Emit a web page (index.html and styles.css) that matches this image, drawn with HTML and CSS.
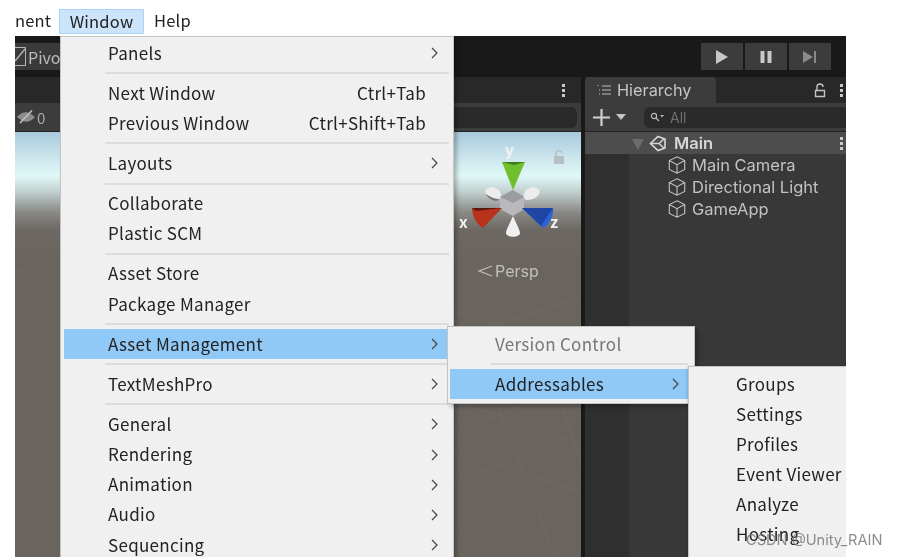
FILE: index.html
```html
<!DOCTYPE html>
<html lang="en">
<head>
<meta charset="utf-8">
<title>Unity Window menu</title>
<link rel="stylesheet" href="styles.css">
</head>
<body>
<div class="stage">
  <nav class="menubar">
    <span class="mb-item first">nent</span>
    <span class="mb-item active">Window</span>
    <span class="mb-item">Help</span>
  </nav>
  <div class="app">
    <header class="toolbar">
      <div class="pivot"><svg class="check" width="11" height="19" viewBox="0 0 11 19"><path d="M0 .5h10.500v18H0" fill="none" stroke="#b5b5b5" stroke-width="1"/><path d="M0 14L10 2" stroke="#b5b5b5" stroke-width="1.400"/></svg><span>Pivot</span></div>
      <div class="play">
        <span class="pbtn"><svg width="14" height="16" viewBox="0 0 14 16"><path d="M1 1l12 7-12 7z" fill="#c8c8c8"/></svg></span>
        <span class="pbtn"><svg width="14" height="14" viewBox="0 0 14 14"><path d="M1.500 1h4v12h-4zM8.500 1h4v12h-4z" fill="#c8c8c8"/></svg></span>
        <span class="pbtn"><svg width="16" height="14" viewBox="0 0 16 14"><path d="M1 1l10 6-10 6z" fill="#8a8a8a"/><path d="M12 1h2v12h-2z" fill="#8a8a8a"/></svg></span>
      </div>
    </header>
    <main class="panels">
      <section class="scene">
        <div class="tabrow scene-tabs"><span class="dots"><i></i><i></i><i></i></span></div>
        <div class="subbar scene-sub">
          <span class="eye"><svg width="20" height="16" viewBox="0 0 20 16"><path d="M1 8c4-5 10-6 14-3 1 1 3 2 4 3-4 5-10 6-14 3-1-1-3-2-4-3z" fill="#8d8d8d"/><path d="M4 14L16 1.500" stroke="#c2c2c2" stroke-width="1.600"/></svg>0</span>
          <span class="scene-field"></span>
        </div>
        <div class="view">
          <svg class="grid" width="566" height="425" viewBox="0 0 566 425" preserveAspectRatio="none">
            <g stroke="#7a746e" stroke-width="1" fill="none" opacity=".35">
              <path d="M0 140L80 125M0 235L60 205M0 170L50 190M430 210L566 165M440 250L566 205M440 300L566 250M440 350L566 300M445 400L566 345"/>
              <path d="M440 180L566 215M440 225L566 265M440 270L566 310M440 320L566 360M470 240L540 425M520 200L566 330"/>
            </g>
          </svg>
          <svg class="gizmo" width="110" height="90" viewBox="0 0 110 90">
            <path d="M28 35c3-5 9-5 15 0l2 6-3 3c-7 0-13-3-14-9z" fill="#ececec"/>
            <path d="M29 38c4 3 9 5 14 5l-3 2c-5 0-9-3-11-7z" fill="#777"/>
            <path d="M83 35c-3-5-9-5-15 0l-2 6 3 3c7 0 13-3 14-9z" fill="#ececec"/>
            <path d="M43 41l13-7 11 7v12l-11 7-13-7z" fill="#b9b9bd"/>
            <path d="M43 41l13-7 11 7-11 6z" fill="#9c9ca0"/>
            <path d="M45 6h23L56 34z" fill="#6fbf2c"/>
            <path d="M45 6h23l-11 3z" fill="#3f7d1a"/>
            <path d="M56 60c-3 7-7 14-7 17 0 5 14 5 14 0 0-3-4-10-7-17z" fill="#f0f0f0"/>
            <path d="M45 52H15c0 8 5 17 11 20z" fill="#b8331b"/>
            <path d="M45 52H15l4 3z" fill="#5f170b"/>
            <path d="M65 52h31c1 8-4 17-10 20z" fill="#2a63d8"/>
            <path d="M65 52h31l-12 18z" fill="#1f46a4"/>
          </svg>
          <span class="axis ax-y">y</span>
          <span class="axis ax-x">x</span>
          <span class="axis ax-z">z</span>
          <svg class="view-lock" width="12" height="14" viewBox="0 0 12 14"><path d="M1 6h10v8H1z" fill="#b5c0c4"/><path d="M3 6V3.500a3 3 0 0 1 6 0" fill="none" stroke="#b5c0c4" stroke-width="1.500"/></svg>
          <span class="persp"><svg width="16" height="12" viewBox="0 0 16 12"><path d="M15 1L2 6l13 5" fill="none" stroke="#c3c0bc" stroke-width="1.200"/></svg>Persp</span>
        </div>
      </section>
      <section class="hierarchy">
        <div class="tabrow">
          <div class="h-tab">
            <svg width="14" height="12" viewBox="0 0 14 12"><path d="M5 2h9M5 6h9M5 10h9M1 1v1M3 6h-1M3 10h-1" stroke="#bdbdbd" stroke-width="1" fill="none"/></svg>
            <span>Hierarchy</span>
          </div>
          <svg class="h-lock" width="12" height="15" viewBox="0 0 12 15"><path d="M1.500 7.500h9v6h-9z" fill="none" stroke="#c4c4c4" stroke-width="1.400"/><path d="M3 7V4a3 3 0 0 1 6 0" fill="none" stroke="#c4c4c4" stroke-width="1.400"/></svg>
          <span class="dots"><i></i><i></i><i></i></span>
        </div>
        <div class="subbar h-sub">
          <span class="plus"><svg width="17" height="17" viewBox="0 0 17 17"><path d="M8.500 0v17M0 8.500h17" stroke="#d0d0d0" stroke-width="2.200"/></svg></span>
          <span class="caret"></span>
          <span class="search"><svg width="14" height="10" viewBox="0 0 14 10"><circle cx="4" cy="4" r="2.600" fill="none" stroke="#bbb" stroke-width="1.200"/><path d="M6 6l3 3" stroke="#bbb" stroke-width="1.200"/><path d="M10 3h4l-2 2.500z" fill="#bbb"/></svg>All</span>
        </div>
        <div class="scene-row">
          <span class="tri"></span>
          <svg width="17" height="17" viewBox="0 0 17 17"><path d="M9 1.500l7 2.500v9l-7 2.500-7.500-7z" fill="none" stroke="#d8d8d8" stroke-width="1.600"/><path d="M1.500 8.500H10l5-4.500M10 8.500l5 4.500" fill="none" stroke="#d8d8d8" stroke-width="1.400"/></svg>
          <b>Main</b>
          <span class="dots"><i></i><i></i><i></i></span>
        </div>
        <div class="tree">
          <div class="node"><svg class="cube" width="18" height="18" viewBox="0 0 18 18"><path d="M9 .8l7.700 3.700v9L9 17.200 1.300 13.500v-9zM1.300 4.500L9 8.700l7.700-4.200M9 8.700v8.500" fill="none" stroke="#c2c2c2" stroke-width="1.100"/></svg>Main Camera</div>
          <div class="node"><svg class="cube" width="18" height="18" viewBox="0 0 18 18"><path d="M9 .8l7.700 3.700v9L9 17.200 1.300 13.500v-9zM1.300 4.500L9 8.700l7.700-4.200M9 8.700v8.500" fill="none" stroke="#c2c2c2" stroke-width="1.100"/></svg>Directional Light</div>
          <div class="node"><svg class="cube" width="18" height="18" viewBox="0 0 18 18"><path d="M9 .8l7.700 3.700v9L9 17.200 1.300 13.500v-9zM1.300 4.500L9 8.700l7.700-4.200M9 8.700v8.500" fill="none" stroke="#c2c2c2" stroke-width="1.100"/></svg>GameApp</div>
        </div>
      </section>
    </main>
  </div>

  <div class="menu menu-main">
    <div class="row"><span>Panels</span><svg class="chev" width="7" height="12" viewBox="0 0 7 12"><path d="M1 1l5 5-5 5" fill="none" stroke="#444" stroke-width="1.200"/></svg></div>
    <hr>
    <div class="row"><span>Next Window</span><span class="key">Ctrl+Tab</span></div>
    <div class="row"><span>Previous Window</span><span class="key">Ctrl+Shift+Tab</span></div>
    <hr>
    <div class="row"><span>Layouts</span><svg class="chev" width="7" height="12" viewBox="0 0 7 12"><path d="M1 1l5 5-5 5" fill="none" stroke="#444" stroke-width="1.200"/></svg></div>
    <hr>
    <div class="row"><span>Collaborate</span></div>
    <div class="row"><span>Plastic SCM</span></div>
    <hr>
    <div class="row"><span>Asset Store</span></div>
    <div class="row"><span>Package Manager</span></div>
    <hr>
    <div class="row hot"><span>Asset Management</span><svg class="chev" width="7" height="12" viewBox="0 0 7 12"><path d="M1 1l5 5-5 5" fill="none" stroke="#444" stroke-width="1.200"/></svg></div>
    <hr>
    <div class="row"><span>TextMeshPro</span><svg class="chev" width="7" height="12" viewBox="0 0 7 12"><path d="M1 1l5 5-5 5" fill="none" stroke="#444" stroke-width="1.200"/></svg></div>
    <hr>
    <div class="row"><span>General</span><svg class="chev" width="7" height="12" viewBox="0 0 7 12"><path d="M1 1l5 5-5 5" fill="none" stroke="#444" stroke-width="1.200"/></svg></div>
    <div class="row"><span>Rendering</span><svg class="chev" width="7" height="12" viewBox="0 0 7 12"><path d="M1 1l5 5-5 5" fill="none" stroke="#444" stroke-width="1.200"/></svg></div>
    <div class="row"><span>Animation</span><svg class="chev" width="7" height="12" viewBox="0 0 7 12"><path d="M1 1l5 5-5 5" fill="none" stroke="#444" stroke-width="1.200"/></svg></div>
    <div class="row"><span>Audio</span><svg class="chev" width="7" height="12" viewBox="0 0 7 12"><path d="M1 1l5 5-5 5" fill="none" stroke="#444" stroke-width="1.200"/></svg></div>
    <div class="row"><span>Sequencing</span><svg class="chev" width="7" height="12" viewBox="0 0 7 12"><path d="M1 1l5 5-5 5" fill="none" stroke="#444" stroke-width="1.200"/></svg></div>
  </div>

  <div class="menu menu-sub">
    <div class="row disabled"><span>Version Control</span></div>
    <hr>
    <div class="row hot"><span>Addressables</span><svg class="chev" width="7" height="12" viewBox="0 0 7 12"><path d="M1 1l5 5-5 5" fill="none" stroke="#444" stroke-width="1.200"/></svg></div>
  </div>

  <div class="menu menu-third">
    <div class="row"><span>Groups</span></div>
    <div class="row"><span>Settings</span></div>
    <div class="row"><span>Profiles</span></div>
    <div class="row"><span>Event Viewer</span></div>
    <div class="row"><span>Analyze</span></div>
    <div class="row"><span>Hosting</span></div>
  </div>

  <div class="watermark">CSDN @Unity_RAIN</div>
</div>
</body>
</html>
```
FILE: styles.css
```css
* { box-sizing: border-box; }
html, body { margin: 0; height: 100%; background: #fff; overflow: hidden; }
.stage {
  position: relative;
  width: 897px;
  height: 557px;
  overflow: hidden;
  font-family: "Noto Sans CJK SC", "Noto Sans", sans-serif;
  font-size: 17px;
  letter-spacing: 0.3px;
  color: #222;
  filter: blur(0.35px);
}

/* Top menu bar */
.menubar {
  height: 36px;
  padding: 9px 0 0 15px;
  display: flex;
  align-items: stretch;
  font-size: 16.500px;
  letter-spacing: 0.2px;
}
.mb-item { height: 25px; line-height: 23px; padding: 0 10px; }
.mb-item.first { width: 44px; padding: 0; overflow: hidden; }
.mb-item.active {
  width: 85px;
  background: #cce4f9;
  border: 1px solid #a9d3f7;
  padding: 0;
  text-align: center;
}

/* Editor */
.app {
  margin-left: 15px;
  width: 831px;
  height: 521px;
  background: #191919;
  display: flex;
  flex-direction: column;
  letter-spacing: 0;
}
.toolbar {
  height: 41px;
  flex: none;
  padding: 7px 15px 7px 0;
  display: flex;
  justify-content: space-between;
}
.pivot {
  width: 45px;
  height: 27px;
  background: #3a3a3a;
  display: flex;
  align-items: center;
  color: #bcbcbc;
  font-size: 16px;
  gap: 2px;
  white-space: nowrap;
}
.check { flex: none; }
.play { display: flex; gap: 2px; }
.pbtn {
  width: 42px;
  height: 27px;
  background: #3c3c3c;
  display: flex;
  align-items: center;
  justify-content: center;
}
.panels { flex: 1; display: flex; gap: 4px; min-height: 0; }
.scene { width: 566px; display: flex; flex-direction: column; }
.hierarchy { flex: 1; display: flex; flex-direction: column; background: #2f2f2f; position: relative; }

.tabrow {
  height: 26px;
  flex: none;
  background: #282828;
  display: flex;
  align-items: center;
}
.scene-tabs { justify-content: flex-end; padding-right: 16px; }
.dots { display: flex; flex-direction: column; gap: 2px; }
.dots i { width: 3px; height: 3px; background: #c8c8c8; display: block; }

.subbar { height: 29px; flex: none; background: #3c3c3c; border-bottom: 1px solid #232323; display: flex; align-items: center; }
.scene-sub { justify-content: space-between; padding-right: 4px; }
.eye { display: flex; align-items: center; color: #aaa; font-size: 15px; gap: 1px; padding-left: 1px; }
.scene-field { width: 140px; height: 21px; background: #2a2a2a; border-radius: 6px; }

.view {
  flex: 1;
  position: relative;
  overflow: hidden;
  background: linear-gradient(#a9c9dd 0, #cfe8ee 28px, #dff8f7 44px, #c0cfce 60px, #8a8a86 80px, #6d6863 98px, #6a645e 130px);
}
.grid { position: absolute; left: 0; top: 0; }
.gizmo { position: absolute; left: 442px; top: 24px; }
.axis { position: absolute; color: #f2f2f2; font-size: 15px; font-weight: 700; font-family: "Inter", sans-serif; line-height: 16px; }
.ax-y { left: 490px; top: 11px; }
.ax-x { left: 444px; top: 83px; }
.ax-z { left: 535px; top: 83px; }
.view-lock { position: absolute; left: 538px; top: 18px; }
.persp {
  position: absolute;
  left: 462px;
  top: 129px;
  color: #c3c0bc;
  font-family: "Inter", sans-serif;
  font-size: 16px;
  display: flex;
  align-items: center;
  gap: 2px;
}

/* Hierarchy */
.h-tab {
  width: 131px;
  height: 26px;
  background: #3c3c3c;
  border-radius: 4px 4px 0 0;
  color: #c6c6c6;
  font-family: "Inter", sans-serif;
  font-size: 16.300px;
  display: flex;
  align-items: center;
  gap: 6px;
  padding-left: 12px;
}
.h-lock { margin-left: auto; margin-right: 14px; }
.hierarchy > .tabrow { padding-right: 3px; }
.h-sub { padding-left: 8px; }
.plus { width: 17px; height: 17px; display: block; }
.plus svg { display: block; }
.caret { width: 0; height: 0; margin-left: 6px; border: 5px solid transparent; border-top: 6px solid #c4c4c4; border-bottom: 0; }
.search {
  margin-left: 18px;
  flex: 1;
  height: 21px;
  background: #2a2a2a;
  border-radius: 6px 0 0 6px;
  color: #6f6f6f;
  font-family: "Inter", sans-serif;
  font-size: 14px;
  display: flex;
  align-items: center;
  gap: 6px;
  padding-left: 6px;
}
.scene-row {
  height: 22px;
  flex: none;
  background: #4d4d4d;
  color: #d6d6d6;
  font-family: "Inter", sans-serif;
  font-size: 16.500px;
  display: flex;
  align-items: center;
  padding: 0 3px 0 47px;
  gap: 5px;
}
.scene-row b { font-weight: 600; margin-left: 3px; }
.scene-row .dots { margin-left: auto; }
.tri { width: 0; height: 0; border: 6px solid transparent; border-top: 11px solid #6c6c6c; border-bottom: 0; margin-top: 2px; }
.tree { flex: 1; margin-left: 44px; background: #383838; }
.node {
  height: 22px;
  color: #c2c2c2;
  font-family: "Inter", sans-serif;
  font-size: 16.500px;
  display: flex;
  align-items: center;
  gap: 6px;
  padding-left: 39px;
  white-space: nowrap;
}
.cube { flex: none; }

/* Menus */
.menu {
  position: absolute;
  background: #f0f0f0;
  border: 1px solid #c4c4c4;
  box-shadow: 3px 3px 4px rgba(0,0,0,.25);
}
.menu hr { border: 0; height: 2px; background: #dcdcdc; margin: 4px 4px 4px 41px; }
.row {
  height: 30.150px;
  padding-bottom: 2px;
  display: flex;
  align-items: center;
  white-space: nowrap;
  position: relative;
}
.row .key { margin-left: auto; margin-right: 27px; }
.row .chev { position: absolute; right: 15px; top: 9px; }
.row.hot { background: #90c8f6; }
.row.disabled { color: #767676; }

.menu-main { left: 60px; top: 36px; width: 394px; height: 530px; padding: 1px 0 0 3px; }
.menu-main .row { padding-left: 44px; }
.menu-sub { left: 447px; top: 326px; width: 248px; height: 78px; padding: 2px 6px 2px 2px; }
.menu-sub .row { padding-left: 45px; }
.menu-sub hr { margin: 4px 0 4px 41px; }
.menu-sub .chev { right: 9px; }
.menu-third { left: 688px; top: 366px; width: 158px; height: 200px; padding: 2px 0 0 47px; border-right: 0; box-shadow: -1px 0 2px rgba(0,0,0,.15); }

.watermark {
  position: absolute;
  left: 746px;
  top: 530px;
  color: rgba(120,120,120,.85);
  font-family: "Inter", sans-serif;
  font-size: 14.600px;
  letter-spacing: 0;
  line-height: 20px;
  white-space: nowrap;
}
```
